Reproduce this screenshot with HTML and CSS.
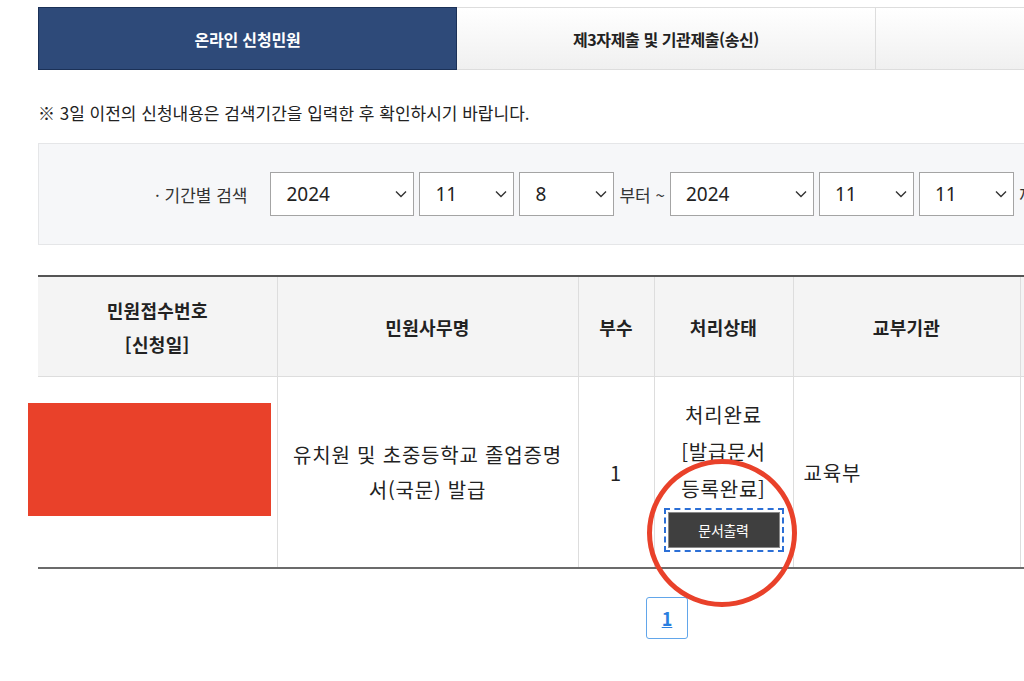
FILE: index.html
```html
<!DOCTYPE html>
<html lang="ko">
<head>
    <meta charset="UTF-8">
    <meta name="viewport" content="width=device-width, initial-scale=1.0">
    <title>민원신청내역</title>
    <link rel="stylesheet" href="styles.css">
</head>
<body>

<div class="page">
    <ul class="tabs">
        <li class="tab active">온라인 신청민원</li>
        <li class="tab narrow">제3자제출 및 기관제출(송신)</li>
        <li class="tab"></li>
    </ul>

    <p class="notice">※ 3일 이전의 신청내용은 검색기간을 입력한 후 확인하시기 바랍니다.</p>

    <div class="search-box">
        <span class="search-label">· 기간별 검색</span>
        <div class="select wide"><span>2024</span><svg viewBox="0 0 12 8" width="12" height="8"><path d="M1 1.5l5 5 5-5" fill="none" stroke="#333" stroke-width="1.4"/></svg></div>
        <div class="select"><span>11</span><svg viewBox="0 0 12 8" width="12" height="8"><path d="M1 1.5l5 5 5-5" fill="none" stroke="#333" stroke-width="1.4"/></svg></div>
        <div class="select"><span>8</span><svg viewBox="0 0 12 8" width="12" height="8"><path d="M1 1.5l5 5 5-5" fill="none" stroke="#333" stroke-width="1.4"/></svg></div>
        <span class="search-text">부터 ~</span>
        <div class="select wide"><span>2024</span><svg viewBox="0 0 12 8" width="12" height="8"><path d="M1 1.5l5 5 5-5" fill="none" stroke="#333" stroke-width="1.4"/></svg></div>
        <div class="select"><span>11</span><svg viewBox="0 0 12 8" width="12" height="8"><path d="M1 1.5l5 5 5-5" fill="none" stroke="#333" stroke-width="1.4"/></svg></div>
        <div class="select"><span>11</span><svg viewBox="0 0 12 8" width="12" height="8"><path d="M1 1.5l5 5 5-5" fill="none" stroke="#333" stroke-width="1.4"/></svg></div>
        <span class="search-text">까지</span>
    </div>

    <div class="table-wrap">
        <table class="list">
            <colgroup>
                <col style="width:239px">
                <col style="width:301px">
                <col style="width:76px">
                <col style="width:139px">
                <col style="width:227px">
                <col>
            </colgroup>
            <thead>
                <tr>
                    <th>민원접수번호<br>[신청일]</th>
                    <th>민원사무명</th>
                    <th>부수</th>
                    <th>처리상태</th>
                    <th>교부기관</th>
                    <th></th>
                </tr>
            </thead>
            <tbody>
                <tr>
                    <td></td>
                    <td>유치원 및 초중등학교 졸업증명서(국문) 발급</td>
                    <td>1</td>
                    <td class="status">
                        처리완료<br>[발급문서 등록완료]
                        <button type="button" class="print-btn">문서출력</button>
                    </td>
                    <td class="left">교육부</td>
                    <td></td>
                </tr>
            </tbody>
        </table>
        <div class="redact"></div>
        <div class="mark"></div>
    </div>

    <div class="paging">
        <a href="#" class="page-num">1</a>
    </div>
</div>

</body>
</html>
```

FILE: styles.css
```css
html, body {
    margin: 0;
    overflow: hidden;
}
body {
    font-family: "Noto Sans CJK KR", "Noto Sans", sans-serif;
    color: #222;
    background-color: #fff;
}
.page {
    width: 1257px;
    padding: 7px 0 0 38px;
}
.tabs {
    display: flex;
    margin: 0;
    padding: 0;
    list-style: none;
}
.tab {
    width: 419px;
    height: 63px;
    box-sizing: border-box;
    display: flex;
    align-items: center;
    justify-content: center;
    font-size: 16px;
    font-weight: bold;
    letter-spacing: -0.2px;
    color: #222;
    border: 1px solid #ddd;
    border-left: none;
    background: linear-gradient(#fff, #f0f0f0);
}
.tab.narrow {
    letter-spacing: -0.4px;
}
.tab.active {
    color: #fff;
    background: #2e4a79;
    border: 1px solid #1b3157;
}
.notice {
    margin: 31px 0 0;
    font-size: 17px;
    line-height: 24px;
    color: #222;
}
.search-box {
    margin-top: 18px;
    height: 102px;
    box-sizing: border-box;
    display: flex;
    align-items: center;
    gap: 5px;
    padding-left: 116px;
    background-color: #f6f7f9;
    border: 1px solid #e5e6e8;
}
.search-label {
    font-size: 17px;
    color: #333;
    margin-right: 18px;
}
.search-text {
    font-size: 17px;
    color: #333;
}
.select {
    width: 95px;
    height: 44px;
    box-sizing: border-box;
    display: flex;
    align-items: center;
    justify-content: space-between;
    padding: 0 6px 0 15px;
    background-color: #fff;
    border: 1px solid #a4a4a4;
    font-family: "Noto Sans", sans-serif;
    font-size: 19px;
    color: #222;
    flex-shrink: 0;
}
.select.wide {
    width: 144px;
}
.table-wrap {
    position: relative;
    margin-top: 30px;
}
.list {
    width: 1257px;
    border-collapse: collapse;
    table-layout: fixed;
    border-top: 2px solid #555;
    border-bottom: 2px solid #6b6b6b;
}
.list th {
    height: 99px;
    padding: 0;
    background-color: #f4f4f4;
    font-size: 18px;
    line-height: 34px;
    letter-spacing: 0.3px;
    font-weight: bold;
    color: #222;
    border: 1px solid #ddd;
    border-top: none;
}
.list td {
    height: 190px;
    padding: 0 10px;
    text-align: center;
    font-size: 20px;
    line-height: 35px;
    letter-spacing: 0.8px;
    color: #222;
    border-left: 1px solid #ddd;
    border-right: 1px solid #ddd;
}
.list th:first-child,
.list td:first-child {
    border-left: none;
}
.list td.left {
    text-align: left;
}
.list td.status {
    line-height: 37px;
    word-break: keep-all;
}
.print-btn {
    display: block;
    margin: 5px auto 0;
    width: 112px;
    height: 36px;
    background-color: #3f3f3f;
    border: 1px solid #8a8a8a;
    color: #fff;
    font-family: "Noto Sans CJK KR", sans-serif;
    font-size: 14px;
    letter-spacing: -0.3px;
    outline: 2px dashed #2b6fd6;
    outline-offset: 2px;
}
.redact {
    position: absolute;
    left: -10px;
    top: 128px;
    width: 243px;
    height: 113px;
    background-color: #e9412a;
}
.mark {
    position: absolute;
    left: 609px;
    top: 184px;
    width: 150px;
    height: 148px;
    box-sizing: border-box;
    border: 5px solid #e9412a;
    border-radius: 50%;
}
.paging {
    margin-top: 28px;
    padding-left: 608px;
}
.page-num {
    display: inline-flex;
    align-items: center;
    justify-content: center;
    width: 42px;
    height: 42px;
    box-sizing: border-box;
    border: 1px solid #62a6ea;
    border-radius: 3px;
    color: #2a7fe0;
    font-size: 18px;
    font-weight: bold;
}
```
